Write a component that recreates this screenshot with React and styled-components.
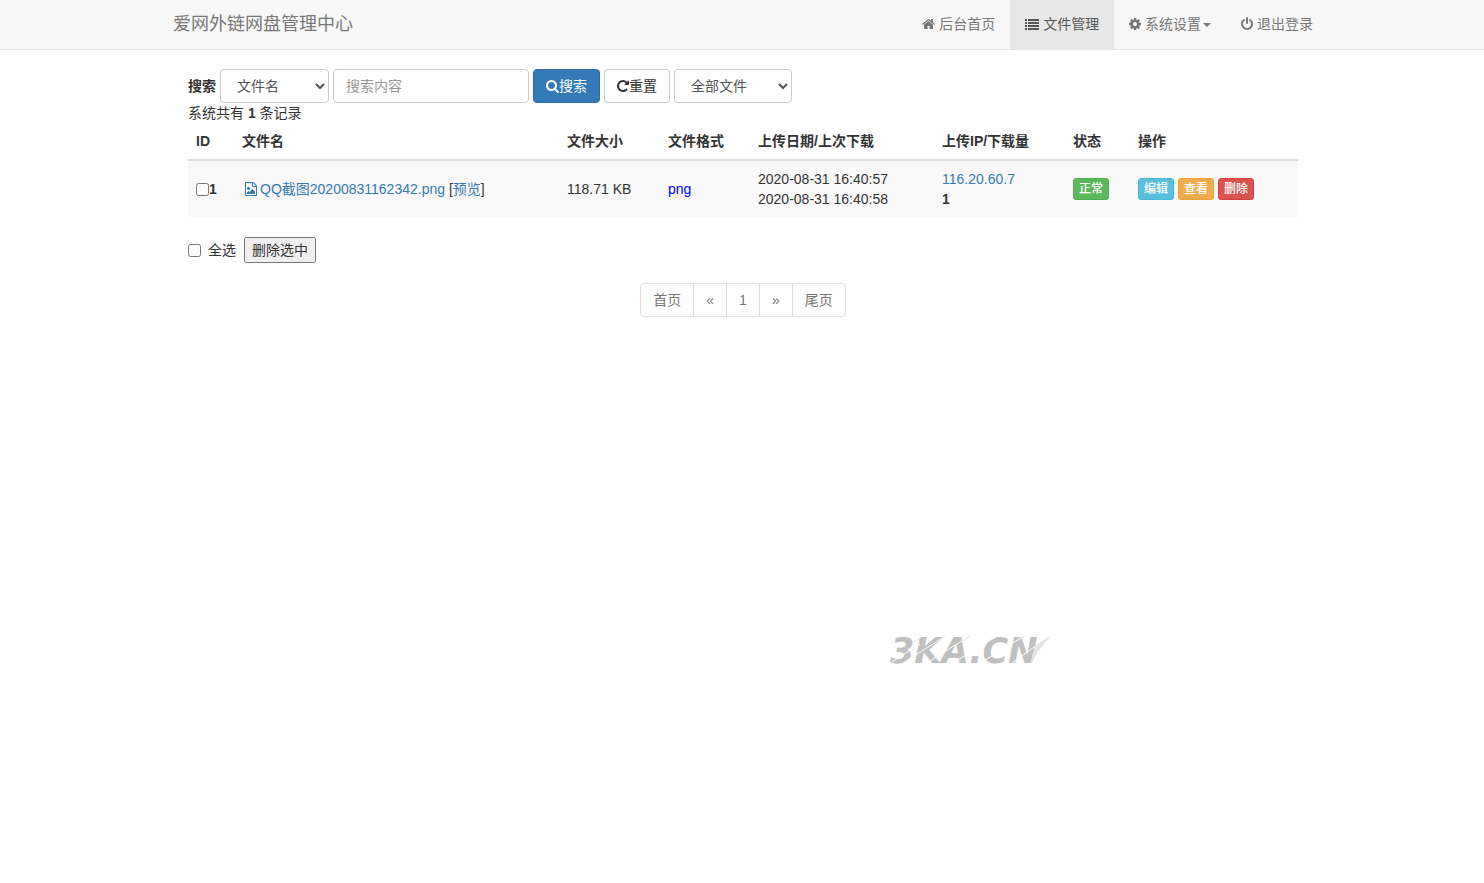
import React, { useState } from 'react';
import styled, { createGlobalStyle } from 'styled-components';

const GlobalStyle = createGlobalStyle`
*, *::before, *::after {
box-sizing: border-box;
}
body {
margin: 0;
background-color: #fff;
color: #333;
font-family: "Liberation Sans", "Noto Sans CJK SC", sans-serif;
font-size: 14px;
line-height: 20px;
}
input, select, button {
margin: 0;
color: inherit;
font-family: inherit;
font-size: inherit;
line-height: inherit;
}
a {
color: #337ab7;
text-decoration: none;
}
`;

const Navbar = styled.nav`
background-color: #f8f8f8;
border-bottom: 1px solid #e7e7e7;
`;

const NavInner = styled.div`
display: flex;
flex-wrap: wrap;
justify-content: space-between;
max-width: 1172px;
margin: 0 auto;
padding-left: 17px;
`;

const Brand = styled.a`
padding: 14px 0;
color: #777;
font-size: 18px;
`;

const NavList = styled.ul`
display: flex;
flex-wrap: wrap;
margin: 0;
padding: 0;
list-style: none;
`;

const NavLink = styled.a`
display: block;
padding: 14px 15px 15px;
color: ${({ $active }) => ($active ? '#555' : '#777')};
background-color: ${({ $active }) => ($active ? '#e7e7e7' : 'transparent')};
`;

const Caret = styled.span`
display: inline-block;
margin-left: 2px;
vertical-align: middle;
border-top: 4px solid;
border-right: 4px solid transparent;
border-left: 4px solid transparent;
`;

const IconSvg = styled.svg`
height: 14px;
width: ${({ $width }) => $width}px;
vertical-align: -2px;
fill: currentColor;
`;

const Content = styled.main`
max-width: 1172px;
margin: 0 auto;
padding: 19px 30px 0 32px;
`;

const SearchForm = styled.form`
display: flex;
flex-wrap: wrap;
align-items: center;
gap: 4px;
`;

const SearchLabel = styled.label`
font-weight: bold;
`;

const Select = styled.select`
width: ${({ $width }) => $width}px;
height: 34px;
padding: 6px 12px;
color: #555;
background-color: #fff;
border: 1px solid #ccc;
border-radius: 4px;
`;

const TextInput = styled.input`
width: 196px;
height: 34px;
padding: 6px 12px;
color: #555;
border: 1px solid #ccc;
border-radius: 4px;
&::placeholder {
color: #999;
}
`;

const Button = styled.button`
height: 34px;
padding: 6px 12px;
color: ${({ $primary }) => ($primary ? '#fff' : '#333')};
background-color: ${({ $primary }) => ($primary ? '#337ab7' : '#fff')};
border: 1px solid ${({ $primary }) => ($primary ? '#2e6da4' : '#ccc')};
border-radius: 4px;
white-space: nowrap;
`;

const Table = styled.table`
width: 100%;
margin-bottom: 20px;
border-collapse: collapse;
table-layout: fixed;
`;

const HeadCell = styled.th`
padding: 8px;
text-align: left;
border-bottom: 2px solid #ddd;
`;

const Row = styled.tr`
background-color: #f9f9f9;
`;

const Cell = styled.td`
padding: 8px;
vertical-align: middle;
`;

const IdGroup = styled.label`
display: flex;
align-items: center;
font-weight: bold;
`;

const Checkbox = styled.input`
width: 13px;
height: 13px;
`;

const Format = styled.span`
color: #0000ff;
`;

const TagGroup = styled.div`
display: flex;
gap: 4px;
`;

const Tag = styled.a`
padding: 1px 5px;
border: 1px solid ${({ $border }) => $border};
border-radius: 3px;
background-color: ${({ $color }) => $color};
color: #fff;
font-size: 12px;
font-weight: 500;
line-height: 18px;
`;

const BulkBar = styled.div`
display: flex;
align-items: center;
gap: 8px;
margin-bottom: 20px;
`;

const SelectAll = styled.label`
display: flex;
align-items: center;
gap: 7px;
`;

const Pagination = styled.ul`
display: flex;
justify-content: center;
margin: 0;
padding: 0;
list-style: none;
`;

const PageItem = styled.li`
&:not(:first-child) {
margin-left: -1px;
}
&:first-child a {
border-radius: 4px 0 0 4px;
}
&:last-child a {
border-radius: 0 4px 4px 0;
}
`;

const PageLink = styled.a`
display: block;
padding: 6px 12px;
color: #777;
background-color: #fff;
border: 1px solid #ddd;
`;

const Watermark = styled.svg`
position: absolute;
top: 620px;
left: 60%;
width: 180px;
height: 60px;
overflow: visible;
pointer-events: none;
`;

const WatermarkText = styled.text`
font-family: "DejaVu Sans", sans-serif;
font-size: 35px;
font-weight: bold;
font-style: italic;
`;

const ICONS = {
  home: {
    width: 13,
    viewBox: '64 0 1664 1792',
    path: 'M1472 992v480q0 26-19 45t-45 19h-384v-384h-256v384h-384q-26 0-45-19t-19-45v-480q0-1 .5-3t.5-3l575-474 575 474q1 2 1 6zm223-69l-62 74q-8 9-21 11h-3q-13 0-21-7l-692-577-692 577q-12 8-24 7-13-2-21-11l-62-74q-8-10-7-23.5t11-21.5l719-599q32-26 76-26t76 26l244 204v-195q0-14 9-23t23-9h192q14 0 23 9t9 23v408l219 182q10 8 11 21.5t-7 23.5z',
  },
  list: {
    width: 14,
    viewBox: '0 0 1792 1792',
    path: 'M0 256h256v256H0zM384 256h1408v256H384zM0 640h256v256H0zM384 640h1408v256H384zM0 1024h256v256H0zM384 1024h1408v256H384zM0 1408h256v256H0zM384 1408h1408v256H384z',
  },
  cog: {
    width: 12,
    viewBox: '128 0 1536 1792',
    path: 'M1152 896q0-106-75-181t-181-75-181 75-75 181 75 181 181 75 181-75 75-181zm512-109v222q0 12-8 23t-20 13l-185 28q-19 54-39 91 35 50 107 138 10 12 10 25t-9 23q-27 37-99 108t-94 71q-12 0-26-9l-138-108q-44 23-91 38-16 136-29 186-7 28-36 28h-222q-14 0-24.5-8.5t-11.5-21.5l-28-184q-49-16-90-37l-141 107q-10 9-25 9-14 0-25-11-126-114-165-168-7-10-7-23 0-12 8-23 15-21 51-66.5t54-70.5q-27-50-41-99l-183-27q-13-2-21-12.5t-8-23.5v-222q0-12 8-23t19-13l186-28q14-46 39-92-40-57-107-138-10-12-10-24 0-10 9-23 26-36 98.5-107.5t94.5-71.5q13 0 26 10l138 107q44-23 91-38 16-136 29-186 7-28 36-28h222q14 0 24.5 8.5t11.5 21.5l28 184q49 16 90 37l142-107q9-9 24-9 13 0 25 10 129 119 165 170 7 8 7 22 0 12-8 23-15 21-51 66.5t-54 70.5q26 50 41 98l183 28q13 2 21 12.5t8 23.5z',
  },
  power: {
    width: 12,
    viewBox: '128 0 1536 1792',
    path: 'M1664 896q0 156-61 298t-164 245-245 164-298 61-298-61-245-164-164-245-61-298q0-182 80.5-343t226.5-270q43-32 95.5-25t83.5 50q32 42 24.5 94.5t-49.5 84.5q-98 74-151.5 181t-53.5 228q0 104 40.5 198.5t109.5 163.5 163.5 109.5 198.5 40.5 198.5-40.5 163.5-109.5 109.5-163.5 40.5-198.5q0-121-53.5-228t-151.5-181q-42-32-49.5-84.5t24.5-94.5q31-43 84-50t95 25q146 109 226.5 270t80.5 343zm-640-768v640q0 52-38 90t-90 38-90-38-38-90v-640q0-52 38-90t90-38 90 38 38 90z',
  },
  search: {
    width: 13,
    viewBox: '64 0 1664 1792',
    path: 'M1216 832q0-185-131.5-316.5t-316.5-131.5-316.5 131.5-131.5 316.5 131.5 316.5 316.5 131.5 316.5-131.5 131.5-316.5zm512 832q0 52-38 90t-90 38q-54 0-90-38l-343-342q-179 124-399 124-143 0-273.5-55.5t-225-150-150-225-55.5-273.5 55.5-273.5 150-225 225-150 273.5-55.5 273.5 55.5 225 150 150 225 55.5 273.5q0 220-124 399l343 343q37 37 37 90z',
  },
  repeat: {
    width: 12,
    viewBox: '128 0 1536 1792',
    path: 'M1664 256v448q0 26-19 45t-45 19h-448q-42 0-59-40-17-39 14-69l138-138q-148-137-349-137-104 0-198.5 40.5t-163.5 109.5-109.5 163.5-40.5 198.5 40.5 198.5 109.5 163.5 163.5 109.5 198.5 40.5q119 0 225-52t179-147q7-10 23-12 15 0 25 9l137 138q9 8 9.5 20.5t-7.5 22.5q-109 132-264 204.5t-327 72.5q-156 0-298-61t-245-164-164-245-61-298 61-298 164-245 245-164 298-61q147 0 284.5 55.5t244.5 156.5l130-129q29-31 70-14 39 17 39 59z',
  },
  image: {
    width: 18,
    viewBox: '-256 0 2304 1792',
    path: 'M1596 380q28 28 48 76t20 88v1152q0 40-28 68t-68 28h-1344q-40 0-68-28t-28-68v-1600q0-40 28-68t68-28h896q40 0 88 20t76 48zm-444-244v376h376q-10-29-22-41l-313-313q-12-12-41-22zm384 1528v-1024h-416q-40 0-68-28t-28-68v-416h-768v1536h1280zm-128-448v320h-1024v-192l192-192 128 128 384-384zm-832-192q-80 0-136-56t-56-136 56-136 136-56 136 56 56 136-56 136-136 56z',
  },
};

const NAV_ITEMS = [
  { icon: 'home', text: '后台首页' },
  { icon: 'list', text: '文件管理', active: true },
  { icon: 'cog', text: '系统设置', caret: true },
  { icon: 'power', text: '退出登录' },
];

const COLUMNS = [
  { title: 'ID', width: 46 },
  { title: '文件名' },
  { title: '文件大小', width: 101 },
  { title: '文件格式', width: 90 },
  { title: '上传日期/上次下载', width: 184 },
  { title: '上传IP/下载量', width: 131 },
  { title: '状态', width: 65 },
  { title: '操作', width: 168 },
];

const FILES = [
  {
    id: 1,
    name: 'QQ截图20200831162342.png',
    size: '118.71 KB',
    format: 'png',
    uploaded: '2020-08-31 16:40:57',
    downloaded: '2020-08-31 16:40:58',
    ip: '116.20.60.7',
    count: 1,
  },
];

const PAGES = ['首页', '«', '1', '»', '尾页'];

function Icon({ name }) {
  const { width, viewBox, path } = ICONS[name];
  return (
    <IconSvg $width={ width } viewBox={ viewBox } aria-hidden="true">
      <path d={ path } />
    </IconSvg>
  );
}

export default function App() {
  const [selected, setSelected] = useState([]);
  const [keyword, setKeyword] = useState('');

  const toggleFile = (id) => {
    setSelected(selected.includes(id)
      ? selected.filter((item) => item !== id)
      : [...selected, id]);
  };

  const toggleAll = ({ target }) => {
    setSelected(target.checked ? FILES.map(({ id }) => id) : []);
  };

  return (
    <>
      <GlobalStyle />
      <Navbar>
        <NavInner>
          <Brand href="#home">爱网外链网盘管理中心</Brand>
          <NavList>
            {NAV_ITEMS.map(({ icon, text, active, caret }) => (
              <li key={ icon }>
                <NavLink href={ `#${icon}` } $active={ active }>
                  <Icon name={ icon } />
                  {` ${text}`}
                  {caret && <Caret />}
                </NavLink>
              </li>
            ))}
          </NavList>
        </NavInner>
      </Navbar>
      <Content>
        <SearchForm onSubmit={ (event) => event.preventDefault() }>
          <SearchLabel htmlFor="field">搜索</SearchLabel>
          <Select id="field" $width={ 109 }>
            <option>文件名</option>
          </Select>
          <TextInput
            type="text"
            aria-label="搜索内容"
            placeholder="搜索内容"
            value={ keyword }
            onChange={ ({ target }) => setKeyword(target.value) }
          />
          <Button type="submit" $primary>
            <Icon name="search" />
            搜索
          </Button>
          <Button type="button" onClick={ () => setKeyword('') }>
            <Icon name="repeat" />
            重置
          </Button>
          <Select aria-label="全部文件" $width={ 118 }>
            <option>全部文件</option>
          </Select>
        </SearchForm>
        <div>
          系统共有
          {' '}
          <b>{FILES.length}</b>
          {' '}
          条记录
        </div>
        <Table>
          <colgroup>
            {COLUMNS.map(({ title, width }) => <col key={ title } width={ width } />)}
          </colgroup>
          <thead>
            <tr>
              {COLUMNS.map(({ title }) => <HeadCell key={ title }>{title}</HeadCell>)}
            </tr>
          </thead>
          <tbody>
            {FILES.map((file) => (
              <Row key={ file.id }>
                <Cell>
                  <IdGroup>
                    <Checkbox
                      type="checkbox"
                      checked={ selected.includes(file.id) }
                      onChange={ () => toggleFile(file.id) }
                    />
                    {file.id}
                  </IdGroup>
                </Cell>
                <Cell>
                  <a href="#file">
                    <Icon name="image" />
                    {file.name}
                  </a>
                  {' ['}
                  <a href="#preview">预览</a>
                  ]
                </Cell>
                <Cell>{file.size}</Cell>
                <Cell><Format>{file.format}</Format></Cell>
                <Cell>
                  {file.uploaded}
                  <br />
                  {file.downloaded}
                </Cell>
                <Cell>
                  <a href="#ip">{file.ip}</a>
                  <br />
                  <b>{file.count}</b>
                </Cell>
                <Cell>
                  <TagGroup>
                    <Tag href="#status" $color="#5cb85c" $border="#4cae4c">正常</Tag>
                  </TagGroup>
                </Cell>
                <Cell>
                  <TagGroup>
                    <Tag href="#edit" $color="#5bc0de" $border="#46b8da">编辑</Tag>
                    <Tag href="#view" $color="#f0ad4e" $border="#eea236">查看</Tag>
                    <Tag href="#delete" $color="#d9534f" $border="#d43f3a">删除</Tag>
                  </TagGroup>
                </Cell>
              </Row>
            ))}
          </tbody>
        </Table>
        <BulkBar>
          <SelectAll>
            <Checkbox
              type="checkbox"
              checked={ selected.length === FILES.length }
              onChange={ toggleAll }
            />
            全选
          </SelectAll>
          <button type="button">删除选中</button>
        </BulkBar>
        <Pagination>
          {PAGES.map((page) => (
            <PageItem key={ page }>
              <PageLink href="#page">{page}</PageLink>
            </PageItem>
          ))}
        </Pagination>
      </Content>
      <Watermark viewBox="0 0 180 60">
        <WatermarkText x="0" y="43" fill="#c0c0c0">3KA.CN</WatermarkText>
        <path
          d="M2 42L30 24M8 46L54 17M32 46L78 17M58 46L106 17M86 46L132 17M118 46L158 17"
          stroke="#fff"
          strokeWidth="1"
        />
        <path
          d="M24 22L32 17M46 22L55 16M72 22L80 16M126 22L134 16M145 26L159 17L148 31L141 43Z"
          stroke="#e4e4e4"
          fill="#e4e4e4"
          strokeWidth="1"
        />
      </Watermark>
    </>
  );
}
